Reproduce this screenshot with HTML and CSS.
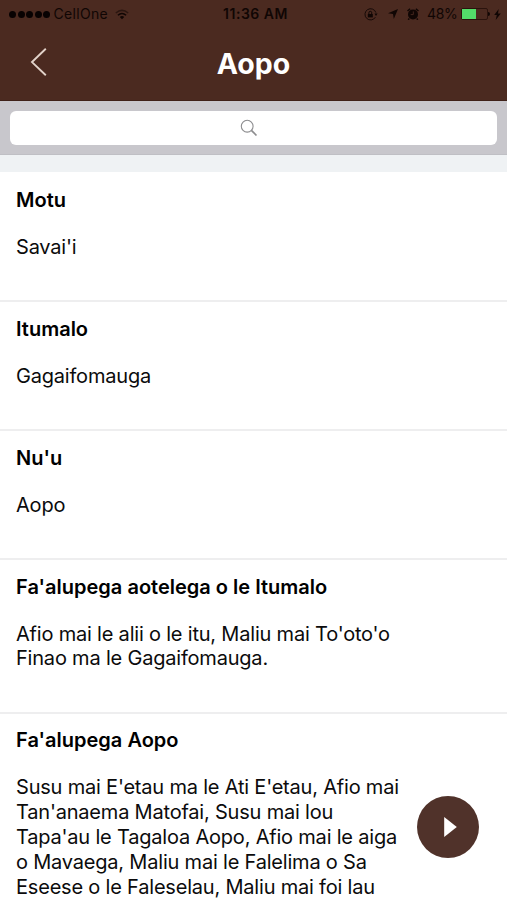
FILE: index.html
```html
<!DOCTYPE html>
<html lang="sm">
<head>
<meta charset="utf-8">
<meta name="viewport" content="width=device-width, initial-scale=1">
<title>Aopo</title>
<link rel="stylesheet" href="styles.css">
</head>
<body>
<header class="header">
  <div class="status">
    <div class="status-left">
      <span class="signal"><i></i><i></i><i></i><i></i><i></i></span>
      <span class="carrier">CellOne</span>
      <svg class="wifi" width="14" height="11" viewBox="0 0 14 11" fill="none" stroke="#100604" stroke-width="1.5"><path d="M.8 4Q7-1.2 13.2 4" stroke-opacity=".55"/><path d="M2.9 6.3Q7 2.8 11.1 6.3"/><path d="M4.8 8Q7 6 9.2 8L7 10.3Z" fill="#100604" stroke="none"/></svg>
    </div>
    <span class="time">11:36 AM</span>
    <div class="status-right">
      <svg class="lock" width="14" height="13" viewBox="0 0 14 13" fill="none" stroke="#100604"><path d="M11.4 9.2A5.6 5.6 0 1 1 11.9 4.6" stroke-width=".9"/><path d="M10.5 5.6h3.1L12 8Z" fill="#100604" stroke="none"/><path d="M3.8 6h5v3.4h-5Z" fill="#100604" stroke="none"/><path d="M4.9 6V4.7a1.4 1.4 0 0 1 2.8 0V6"/></svg>
      <svg class="arrow" width="10" height="10" viewBox="0 0 10 10"><path d="M10 0 5.8 10 5 5 0 4.3Z" fill="#100604"/></svg>
      <svg class="alarm" width="12" height="12" viewBox="0 0 12 12"><circle cx="6" cy="6.4" r="5" fill="#100604"/><path d="M.5 3 3.1.8M11.5 3 8.9.8M2.3 10.5 1.2 11.7M9.7 10.5l1.1 1.2" stroke="#100604" stroke-width="1.5"/><path d="M6.3 3.4v3.2H3.7" fill="none" stroke="#4b2a20" stroke-width=".9"/></svg>
      <span class="percent">48%</span>
      <span class="battery"><i></i></span>
      <svg class="bolt" width="7" height="11" viewBox="0 0 7 11"><path d="M4.7 0 .2 6h2.6L1.7 11 6.8 4.5H4Z" fill="#100604"/></svg>
    </div>
  </div>
  <div class="navbar">
    <svg class="back" width="18" height="30" viewBox="0 0 18 30" fill="none" stroke="#e2d3ca" stroke-width="1.9"><path d="M15.8 1.8 2 15.1 15.8 28.2"/></svg>
    <h1 class="title">Aopo</h1>
  </div>
</header>
<div class="searchbar">
  <div class="search-field">
    <svg width="18" height="18" viewBox="0 0 18 18" fill="none" stroke="#8d8d8f"><circle cx="7.2" cy="7.2" r="5.9" stroke-width="1.1"/><path d="m11.4 11.4 5.1 5.1" stroke-width="1.7"/></svg>
  </div>
</div>
<main class="list">
  <section class="item"><h2>Motu</h2><p>Savai'i</p></section>
  <section class="item"><h2>Itumalo</h2><p>Gagaifomauga</p></section>
  <section class="item"><h2>Nu'u</h2><p>Aopo</p></section>
  <section class="item"><h2>Fa'alupega aotelega o le Itumalo</h2><p>Afio mai le alii o le itu, Maliu mai To'oto'o<br>Finao ma le Gagaifomauga.</p></section>
  <section class="item"><h2>Fa'alupega Aopo</h2><p>Susu mai E'etau ma le Ati E'etau, Afio mai<br>Tan'anaema Matofai, Susu mai lou<br>Tapa'au le Tagaloa Aopo, Afio mai le aiga<br>o Mavaega, Maliu mai le Falelima o Sa<br>Eseese o le Faleselau, Maliu mai foi lau</p></section>
</main>
<button class="play" aria-label="Play"><svg width="13" height="20" viewBox="0 0 13 20"><path d="M.2 0 12.8 10 .2 20Z" fill="#fff"/></svg></button>
</body>
</html>
```
FILE: styles.css
```css
* { box-sizing: border-box; }
html, body { height: 900px; overflow: hidden; }
body { margin: 0; background: #fff; color: #0b0b0c; font-family: Inter, "Liberation Sans", sans-serif; }
svg { display: block; flex: none; }
.header { height: 101px; background: #4b2a20; border-bottom: 1px solid #3f2119; }
.status { height: 27px; display: grid; grid-template-columns: 1fr auto 1fr; align-items: center; padding: 0 6px 0 9px; font-size: 14px; line-height: 28px; color: #100604; }
.status-left, .status-right { display: flex; align-items: center; }
.status-right { justify-content: flex-end; }
.signal { display: flex; gap: 1.6px; }
.signal i { width: 7px; height: 7px; border-radius: 50%; background: #080202; }
.carrier { margin-left: 3px; width: 54px; white-space: nowrap; letter-spacing: .35px; }
.wifi { margin-left: 8px; }
.time { font-weight: 600; letter-spacing: .5px; padding-left: 1px; }
.arrow { margin-left: 9px; }
.alarm { margin-left: 9px; }
.percent { margin-left: 8px; width: 34px; white-space: nowrap; letter-spacing: -.3px; }
.battery { position: relative; width: 27px; height: 12px; border: 1px solid #2b130d; border-radius: 2px; }
.battery::after { content: ""; position: absolute; left: 26px; top: 3px; width: 2px; height: 4px; background: #100604; border-radius: 0 2px 2px 0; }
.battery i { display: block; width: 14px; height: 10px; background: #53dc69; }
.bolt { margin-left: 6px; }
.lock { margin-right: 1px; }
.navbar { height: 73px; display: grid; grid-template-columns: 80px 1fr 80px; align-items: center; }
.back { margin: 0 0 3px 30px; }
.title { margin: 0; text-align: center; color: #fff; font-size: 28.5px; line-height: 73px; font-weight: 700; }
.searchbar { height: 54px; padding: 10px 10px 9px; background: #c8c7cc; border-bottom: 1px solid #bfbfc4; }
.search-field { height: 34px; border-radius: 6px; background: #fff; display: flex; align-items: center; justify-content: center; padding-right: 9px; }
.list { border-top: 17px solid #eff2f4; padding-top: 1px; }
.item { padding: 14.6px 16px 40.55px; border-bottom: 2px solid #eeeeef; }
.item h2, .item p { margin: 0; font-size: 20px; white-space: nowrap; }
.item h2 { line-height: 25px; font-weight: 600; color: #000; }
.item p { margin-top: 22px; line-height: 24.85px; font-weight: 400; letter-spacing: -.2px; }
.play { position: fixed; left: 417px; top: 795.5px; width: 62px; height: 62px; border: 0; border-radius: 50%; background: #50322a; padding: 0 0 0 4px; display: flex; align-items: center; justify-content: center; }
```
